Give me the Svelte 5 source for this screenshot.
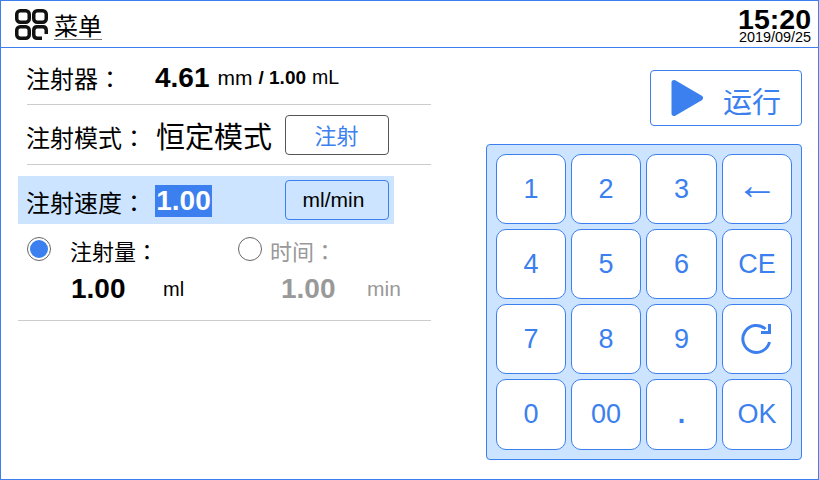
<script>
  const keys = ['1','2','3','←','4','5','6','CE','7','8','9','R','0','00','.','OK'];
</script>

<div class="screen">
  <header class="top">
    <div class="menu">
      <svg class="menu-icon" width="33" height="31" viewBox="0 0 33 31" fill="none" stroke="#111" stroke-width="3.5">
        <rect x="1.75" y="1.75" width="12.5" height="11.5" rx="3.5" />
        <rect x="18.75" y="1.75" width="12.5" height="11.5" rx="3.5" />
        <rect x="1.75" y="17.75" width="12.5" height="11.5" rx="3.5" />
        <path d="M31.25 25 V21.25 Q31.25 17.75 27.75 17.75 H22.25 Q18.75 17.75 18.75 21.25 V25.75 Q18.75 29.25 22.25 29.25 H27" />
      </svg>
      <span class="menu-label">菜单</span>
    </div>
    <div class="clock">
      <div class="time">15:20</div>
      <div class="date">2019/09/25</div>
    </div>
  </header>

  <main class="content">
    <section class="left">
      <div class="row syringe">
        <span class="label label-syringe">注射器<span class="colon">：</span></span>
        <b class="big">4.61</b>
        <span class="unit">mm</span>
        <b class="slash">/ 1.00</b>
        <span class="unit-sm">mL</span>
      </div>
      <div class="row mode">
        <span class="label label-mode">注射模式<span class="colon">：</span></span>
        <span class="mode-value">恒定模式</span>
        <button class="mode-btn">注射</button>
      </div>
      <div class="speed">
        <span class="label label-mode">注射速度<span class="colon">：</span></span>
        <span class="selected">1.00</span>
        <button class="speed-btn">ml/min</button>
      </div>
      <div class="targets">
        <div class="target">
          <div class="target-head">
            <span class="radio on"><i></i></span>
            <span class="target-label">注射量<span class="colon">：</span></span>
          </div>
          <div class="target-val">
            <b class="big val">1.00</b>
            <span class="val-unit">ml</span>
          </div>
        </div>
        <div class="target off">
          <div class="target-head">
            <span class="radio"></span>
            <span class="target-label">时间<span class="colon">：</span></span>
          </div>
          <div class="target-val">
            <b class="big val">1.00</b>
            <span class="val-unit">min</span>
          </div>
        </div>
      </div>
    </section>

    <section class="right">
      <button class="run">
        <svg width="33" height="38" viewBox="0 0 33 38"><path d="M3 3.5 L29.5 19 L3 34.5 Z" fill="#3b80ee" stroke="#3b80ee" stroke-width="5" stroke-linejoin="round" /></svg>
        <span class="run-label">运行</span>
      </button>
      <div class="pad">
        {#each keys as k}
          <button class="key" class:arrow={k === '←'} class:dot={k === '.'}>
            {#if k === 'R'}
              <svg class="reload" width="32" height="32" viewBox="0 0 32 32" fill="none" stroke="#3b80ee" stroke-width="3">
                <path d="M29.5 19 A13.5 13.5 0 1 1 25.5 6" />
                <path d="M29.5 1 V9.5 H21" />
              </svg>
            {:else}
              {k}
            {/if}
          </button>
        {/each}
      </div>
    </section>
  </main>
</div>

<style>
  :global(body) { margin: 0; background: #fff; }
  button { font-family: inherit; padding: 0; margin: 0; cursor: pointer; }
  .screen {
    box-sizing: border-box; width: 819px; height: 480px; border: 1px solid #3b80ee;
    font-family: "Liberation Sans", "Noto Sans CJK SC", sans-serif; color: #000; background: #fff;
    overflow: hidden;
  }
  .colon { font-family: "Noto Sans CJK TC", sans-serif; }
  .top {
    box-sizing: border-box; height: 47px; border-bottom: 1px solid #3b80ee;
    display: flex; justify-content: space-between; padding: 0 7px 0 14px;
  }
  .menu { display: flex; align-items: center; gap: 6px; padding-top: 1px; }
  .menu-label {
    font-size: 24px; line-height: 24px; margin-top: 5px; border-bottom: 1px solid #777;
  }
  .clock { text-align: right; padding-top: 6px; }
  .time { font-size: 28.5px; font-weight: 700; line-height: 24px; }
  .date { font-size: 14.4px; line-height: 12px; }
  .content { display: flex; justify-content: space-between; padding: 0 16px 0 17px; }
  .left { width: 413px; }
  .row { display: flex; align-items: center; margin-left: 9px; border-bottom: 1px solid #ccc; }
  .syringe { height: 56px; }
  .mode { height: 59px; }
  .label { font-size: 24px; line-height: 30px; padding-top: 6px; margin-left: -1px; }
  .label-syringe { width: 129px; }
  .label-mode { width: 130px; }
  .big { font-size: 28px; line-height: 32px; }
  .syringe .big { padding-top: 3px; }
  .unit { font-size: 21px; margin-left: 8px; padding-top: 3px; }
  .slash { font-size: 19px; margin-left: 6px; padding-top: 3px; }
  .unit-sm { font-size: 19.5px; margin-left: 6px; padding-top: 3px; }
  .mode-value { font-size: 29px; line-height: 36px; width: 129px; padding-top: 7px; }
  .mode-btn {
    width: 104px; height: 40px; background: #fff; color: #3b80ee; font-size: 22px;
    border: 1px solid #555; border-radius: 4px; padding-bottom: 2px; padding-right: 1px;
  }
  .speed {
    box-sizing: border-box; width: 376px; height: 48px; margin-top: 11px; background: #cce4ff;
    display: flex; align-items: center; padding-left: 9px;
  }
  .selected {
    width: 57px; height: 32px; margin-left: -1px; background: #3b80ee; color: #fff; font-size: 28px; font-weight: 700;
    line-height: 32px; text-align: center; margin-top: 2px;
  }
  .speed-btn {
    width: 104px; height: 40px; margin-left: 73px; background: #cce4ff; color: #000; font-size: 21px;
    border: 1px solid #3b80ee; border-radius: 4px; padding-right: 7px;
  }
  .targets {
    display: flex; height: 97px; box-sizing: border-box; border-bottom: 1px solid #ccc; padding-left: 9px;
  }
  .target { width: 211px; flex: none; }
  .target.off { width: 193px; }
  .target-head { display: flex; align-items: center; height: 50px; }
  .target-label { font-size: 22px; margin-left: 19px; padding-top: 2px; }
  .off .target-label { color: #999; margin-left: 8px; }
  .radio {
    box-sizing: border-box; width: 24px; height: 24px; border-radius: 50%; border: 1px solid #666;
    display: flex; align-items: center; justify-content: center; background: #fff;
  }
  .radio i { display: block; width: 18px; height: 18px; border-radius: 50%; background: #3b80ee; }
  .target-val { display: flex; align-items: center; padding-left: 44px; margin-top: -1px; }
  .off .target-val { color: #999; padding-left: 43px; }
  .val { width: 92px; }
  .off .val { width: 86px; }
  .val-unit { font-size: 20px; }
  .off .val-unit { font-size: 21px; }
  .right { width: 316px; display: flex; flex-direction: column; align-items: flex-end; padding-top: 22px; }
  .run {
    box-sizing: border-box; width: 152px; height: 56px; background: #fff; border: 1px solid #3b80ee; border-radius: 4px;
    display: flex; align-items: center; gap: 19px; padding: 0 0 0 20px; color: #3b80ee; font-size: 29px;
  }
  .run-label { padding-top: 4px; }
  .pad {
    box-sizing: border-box; width: 316px; height: 316px; margin-top: 18px; background: #cce4ff;
    border: 1px solid #3b80ee; border-radius: 4px; padding: 9px;
    display: grid; grid-template-columns: 70px 70px 71px 70px; grid-template-rows: 70px 70px 70px 71px; gap: 5px 5px;
  }
  .key {
    background: #fff; border: 1px solid #3b80ee; border-radius: 10px; color: #3b80ee; font-size: 27px;
    display: flex; align-items: center; justify-content: center;
  }
  .arrow { font-size: 42px; padding-bottom: 8px; }
  .dot { font-weight: 700; }
  .reload { margin-right: 2px; }
</style>
